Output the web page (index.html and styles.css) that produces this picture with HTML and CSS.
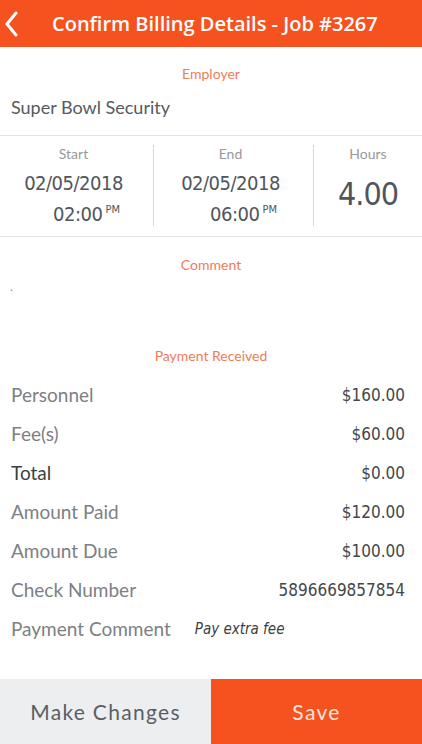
FILE: index.html
```html
<!DOCTYPE html>
<html>
<head>
  <meta name="viewport" content="width=device-width, initial-scale=1">
  <title>Confirm Billing Details</title>
  <link rel="stylesheet" href="styles.css">
</head>
<body>
  <div class="header">
    <a class="back" href="#">
      <svg width="14" height="26" viewBox="0 0 14 26"><path d="M12 2 L3 13 L12 24" fill="none" stroke="#fff" stroke-width="3" stroke-linecap="round" stroke-linejoin="round"/></svg>
    </a>
    <h1>Confirm Billing Details - Job #3267</h1>
  </div>

  <div class="content">
    <div class="section employer">
      <div class="label">Employer</div>
      <div class="employer-name">Super Bowl Security</div>
    </div>

    <div class="times">
      <div class="time-col">
        <div class="small-label">Start</div>
        <div class="date">02/05/2018</div>
        <div class="clock">02:00<sup>PM</sup></div>
      </div>
      <div class="time-col">
        <div class="small-label">End</div>
        <div class="date">02/05/2018</div>
        <div class="clock">06:00<sup>PM</sup></div>
      </div>
      <div class="time-col hours">
        <div class="small-label">Hours</div>
        <div class="hours-value">4.00</div>
      </div>
    </div>

    <div class="section comment">
      <div class="label">Comment</div>
      <div class="comment-text">.</div>
    </div>

    <div class="section payment">
      <div class="label">Payment Received</div>
      <div class="rows">
        <div class="row"><span>Personnel</span><span class="value">$160.00</span></div>
        <div class="row"><span>Fee(s)</span><span class="value">$60.00</span></div>
        <div class="row total"><span>Total</span><span class="value">$0.00</span></div>
        <div class="row"><span>Amount Paid</span><span class="value">$120.00</span></div>
        <div class="row"><span>Amount Due</span><span class="value">$100.00</span></div>
        <div class="row"><span>Check Number</span><span class="value">5896669857854</span></div>
        <div class="row left"><span>Payment Comment</span><span class="note">Pay extra fee</span></div>
      </div>
    </div>
  </div>

  <div class="footer">
    <button class="btn-changes">Make Changes</button>
    <button class="btn-save">Save</button>
  </div>
</body>
</html>
```

FILE: styles.css
```css
html, body {
  height: 100%;
}

body {
  margin: 0;
  padding: 0;
  display: flex;
  flex-direction: column;
  font-family: Lato, "Open Sans", sans-serif;
  color: #555;
  background: #fff;
}

.header {
  height: 47px;
  background-color: #f5521f;
  display: flex;
  align-items: center;
  flex-shrink: 0;
}

.back {
  display: flex;
  width: 22px;
  padding-left: 4px;
}

.header h1 {
  margin: 0 0 0 26px;
  color: #fff;
  font-family: "Open Sans", sans-serif;
  font-size: 20px;
  font-weight: 600;
}

.content {
  flex: 1;
}

.label {
  text-align: center;
  color: #ef7b58;
  font-size: 14px;
}

.employer {
  padding-top: 18px;
  height: 70px;
  border-bottom: 1px solid #e3e4e6;
}

.employer-name {
  margin-top: 14px;
  padding-left: 11px;
  font-size: 18px;
  color: #555a5e;
}

.times {
  display: flex;
  height: 101px;
  border-bottom: 1px solid #e3e4e6;
  padding-top: 9px;
  box-sizing: border-box;
}

.time-col {
  width: 153px;
  text-align: center;
  border-right: 1px solid #d8d9db;
  margin-bottom: 10px;
}

.time-col:nth-child(2) {
  width: 159px;
}

.time-col.hours {
  flex: 1;
  border-right: none;
}

.small-label {
  font-size: 14px;
  color: #999;
  padding-right: 6px;
}

.time-col.hours .small-label {
  padding-right: 0;
}

.date,
.clock,
.hours-value {
  font-family: "DejaVu Sans Condensed", sans-serif;
  font-weight: 300;
  color: #50555a;
}

.date {
  margin-top: 9px;
  font-size: 20px;
  line-height: 24px;
  letter-spacing: -0.5px;
  padding-right: 6px;
}

.clock {
  margin-top: 3px;
  padding-left: 20px;
  font-size: 20px;
  line-height: 24px;
  letter-spacing: -0.5px;
}

.clock sup {
  font-size: 11px;
  margin-left: 3px;
  letter-spacing: 0;
}

.hours-value {
  margin-top: 13px;
  font-size: 32px;
  letter-spacing: -1px;
}

.comment {
  padding-top: 19px;
  height: 101px;
  box-sizing: border-box;
}

.comment-text {
  margin-top: 6px;
  padding-left: 10px;
  font-size: 12px;
  color: #888;
}

.payment {
  padding-top: 9px;
}

.rows {
  margin-top: 11px;
  padding: 0 17px 0 11px;
}

.row {
  display: flex;
  justify-content: space-between;
  align-items: center;
  height: 39px;
  font-size: 19px;
  color: #7d8084;
}

.row.total {
  color: #3c3f42;
}

.row.left {
  justify-content: flex-start;
}

.value {
  color: #43474b;
  font-family: "DejaVu Sans Condensed", sans-serif;
  font-size: 17px;
}

.note {
  margin-left: 24px;
  font-style: italic;
  font-size: 15px;
  color: #3c3f42;
  font-family: "DejaVu Sans Condensed", sans-serif;
}

.footer {
  display: flex;
  height: 65px;
  flex-shrink: 0;
}

.footer button {
  flex: 1;
  border: none;
  font-family: Lato, sans-serif;
  font-size: 21px;
  letter-spacing: 1.3px;
}

.btn-changes {
  background-color: #edeef0;
  color: #5a5f64;
  padding-right: 6px;
}

.btn-save {
  background-color: #f5521f;
  color: #fde5da;
}
```
